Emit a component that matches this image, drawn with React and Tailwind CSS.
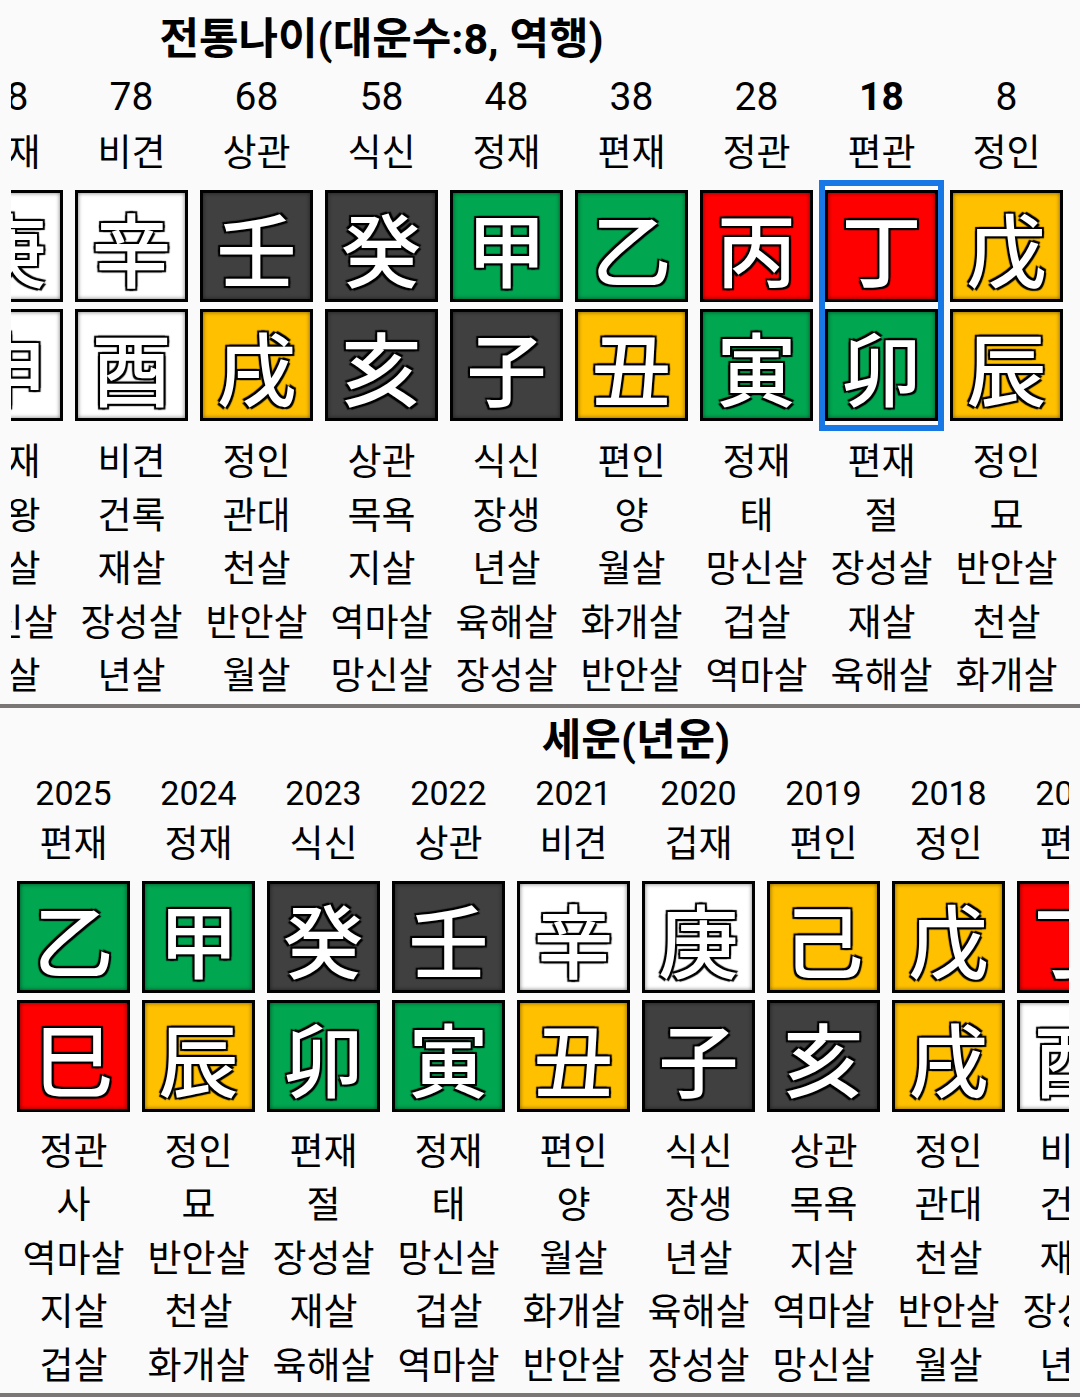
import React from "react";

const BG = {
  green: "bg-[#00a650]",
  red: "bg-[#ff0000]",
  yellow: "bg-[#ffc000]",
  white: "bg-white",
  dark: "bg-[#404040]",
};

const ELEMENT = {
  甲: "green", 乙: "green", 寅: "green", 卯: "green",
  丙: "red", 丁: "red", 巳: "red", 午: "red",
  戊: "yellow", 己: "yellow", 辰: "yellow", 戌: "yellow", 丑: "yellow", 未: "yellow",
  庚: "white", 辛: "white", 申: "white", 酉: "white",
  壬: "dark", 癸: "dark", 亥: "dark", 子: "dark",
};

const daeun = {
  title: "전통나이(대운수:8, 역행)",
  heads: ["108", "98", "88", "78", "68", "58", "48", "38", "28", "18", "8"],
  stems: "戊己庚辛壬癸甲乙丙丁戊".split(""),
  branches: "午未申酉戌亥子丑寅卯辰".split(""),
  topSip: ["정인", "편인", "겁재", "비견", "상관", "식신", "정재", "편재", "정관", "편관", "정인"],
  rows: [
    ["편관", "편인", "겁재", "비견", "정인", "상관", "식신", "편인", "정재", "편재", "정인"],
    ["병", "쇠", "제왕", "건록", "관대", "목욕", "장생", "양", "태", "절", "묘"],
    ["육해살", "화개살", "겁살", "재살", "천살", "지살", "년살", "월살", "망신살", "장성살", "반안살"],
    ["년살", "월살", "망신살", "장성살", "반안살", "역마살", "육해살", "화개살", "겁살", "재살", "천살"],
    ["재살", "천살", "지살", "년살", "월살", "망신살", "장성살", "반안살", "역마살", "육해살", "화개살"],
  ],
  selected: 9,
};

const seun = {
  title: "세운(년운)",
  heads: ["2025", "2024", "2023", "2022", "2021", "2020", "2019", "2018", "2017", "2016"],
  stems: "乙甲癸壬辛庚己戊丁丙".split(""),
  branches: "巳辰卯寅丑子亥戌酉申".split(""),
  topSip: ["편재", "정재", "식신", "상관", "비견", "겁재", "편인", "정인", "편관", "정관"],
  rows: [
    ["정관", "정인", "편재", "정재", "편인", "식신", "상관", "정인", "비견", "겁재"],
    ["사", "묘", "절", "태", "양", "장생", "목욕", "관대", "건록", "제왕"],
    ["역마살", "반안살", "장성살", "망신살", "월살", "년살", "지살", "천살", "재살", "겁살"],
    ["지살", "천살", "재살", "겁살", "화개살", "육해살", "역마살", "반안살", "장성살", "망신살"],
    ["겁살", "화개살", "육해살", "역마살", "반안살", "장성살", "망신살", "월살", "년살", "지살"],
  ],
  selected: -1,
};

const Tile = ({ ch }) => (
  <div
    className={`h-[112px] w-full border-[3px] border-black ${BG[ELEMENT[ch]]} shadow-[inset_0_0_4px_rgba(0,0,0,0.55)] flex items-center justify-center text-white text-[80px] font-medium leading-none font-['Noto_Sans_CJK_KR',sans-serif] [text-shadow:-2px_-2px_1px_#000,2px_-2px_1px_#000,-2px_2px_1px_#000,2px_2px_1px_#000,0_0_3px_#000]`}
  >
    {ch}
  </div>
);

const TextRow = ({ items, className }) => (
  <div className={`flex ${className}`}>
    {items.map((t, i) => (
      <div key={i} className="w-[125px] shrink-0 text-center whitespace-nowrap">
        {t}
      </div>
    ))}
  </div>
);

const Board = ({ data, top }) => {
  const n = data.heads.length;
  return (
    <div className={`mx-[11px] overflow-hidden flex ${top ? "justify-end" : "justify-start"}`}>
      <div
        className={`shrink-0 text-black font-['Roboto','Noto_Sans_CJK_KR',sans-serif] ${
          top ? "w-[1375px]" : "w-[1250px]"
        }`}
      >
        <div
          className={`text-center font-bold text-[43px] ${
            top ? "mt-[8px] h-[62px] leading-[62px]" : "h-[64px] leading-[64px]"
          }`}
        >
          {data.title}
        </div>

        <div className={`flex ${top ? "h-[54px] leading-[54px] text-[39px]" : "h-[42px] leading-[42px] text-[34px]"}`}>
          {data.heads.map((h, i) => (
            <div
              key={i}
              className={`w-[125px] shrink-0 text-center ${i === data.selected ? "font-bold" : ""}`}
            >
              {h}
            </div>
          ))}
        </div>

        <TextRow
          items={data.topSip}
          className={`text-[37px] ${top ? "h-[56px] leading-[60px]" : "h-[57px] leading-[61px]"}`}
        />

        <div className="flex">
          {Array.from({ length: n }).map((_, i) => (
            <div
              key={i}
              className={`w-[125px] shrink-0 border-[6px] py-[4px] flex flex-col gap-[7px] ${
                i === data.selected ? "border-[#1677e5]" : "border-transparent"
              }`}
            >
              <Tile ch={data.stems[i]} />
              <Tile ch={data.branches[i]} />
            </div>
          ))}
        </div>

        <div className={top ? "mt-[5px]" : "mt-[4px]"}>
          {data.rows.map((r, k) => (
            <TextRow key={k} items={r} className="h-[53.5px] leading-[53.5px] text-[37px]" />
          ))}
        </div>
      </div>
    </div>
  );
};

const App = () => {
  return (
    <div className="w-[1080px] h-[1397px] overflow-hidden bg-[#fafafa]">
      <Board data={daeun} top />
      <div className="h-[4px] bg-[#7b7676]" />
      <Board data={seun} />
      <div className="h-[4px] bg-[#7b7676]" />
    </div>
  );
};

export default App;
